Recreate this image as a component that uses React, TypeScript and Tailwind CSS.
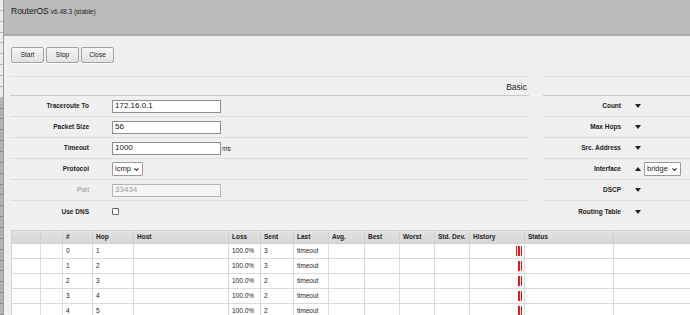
import { ChevronDown } from 'lucide-react'

// ── Data ───────────────────────────────────────────────────────────────────

const FORM_ROWS = [
  { label: 'Traceroute To', kind: 'input', value: '172.16.0.1' },
  { label: 'Packet Size', kind: 'input', value: '56' },
  { label: 'Timeout', kind: 'input', value: '1000', unit: 'ms' },
  { label: 'Protocol', kind: 'select', value: 'icmp' },
  { label: 'Port', kind: 'disabled', value: '33434' },
  { label: 'Use DNS', kind: 'check', value: '' },
]

const SIDE_ROWS = [
  { label: 'Count' },
  { label: 'Max Hops' },
  { label: 'Src. Address' },
  { label: 'Interface', open: true },
  { label: 'DSCP' },
  { label: 'Routing Table' },
]

const COLS = [
  { name: '', w: 29 },
  { name: '', w: 22 },
  { name: '#', w: 30 },
  { name: 'Hop', w: 41 },
  { name: 'Host', w: 95 },
  { name: 'Loss', w: 32 },
  { name: 'Sent', w: 33 },
  { name: 'Last', w: 35 },
  { name: 'Avg.', w: 36 },
  { name: 'Best', w: 35 },
  { name: 'Worst', w: 35 },
  { name: 'Std. Dev.', w: 35 },
  { name: 'History', w: 55 },
  { name: 'Status', w: 89 },
  { name: '', w: 77 },
]

const HOPS = [
  { n: 0, hop: 1, sent: 3, bars: 3 },
  { n: 1, hop: 2, sent: 3, bars: 2 },
  { n: 2, hop: 3, sent: 2, bars: 2 },
  { n: 3, hop: 4, sent: 2, bars: 2 },
  { n: 4, hop: 5, sent: 2, bars: 2 },
]

// ── Small pieces ───────────────────────────────────────────────────────────

function Btn({ children }: { children: React.ReactNode }) {
  return (
    <button className="h-[16px] px-[7px] min-w-[33px] rounded-[2px] border border-[#a3a3a3] bg-gradient-to-b from-[#f6f6f6] to-[#e1e1e1] text-[6.5px] text-[#222] shadow-[0_1px_0_#fff]">
      {children}
    </button>
  )
}

function Caret({ up }: { up?: boolean }) {
  return (
    <svg width="6" height="4" viewBox="0 0 6 4" className="block">
      {up ? <path d="M0 4 L3 0 L6 4 Z" fill="#222" /> : <path d="M0 0 L6 0 L3 4 Z" fill="#222" />}
    </svg>
  )
}

function Select({ value, w }: { value: string; w: string }) {
  return (
    <div className={`${w} h-[14px] flex items-center justify-between px-[2px] bg-white border border-[#9a9a9a] rounded-[1px] text-[7.5px] text-[#222]`}>
      <span>{value}</span>
      <ChevronDown size={7} strokeWidth={3.5} className="text-[#222]" />
    </div>
  )
}

// ── Component ──────────────────────────────────────────────────────────────

export default function App() {
  return (
    <div className="w-[690px] h-[315px] overflow-hidden flex bg-[#f0f0f0] font-['Liberation_Sans',Arial,sans-serif]">
      {/* Sidebar edge */}
      <div className="w-[4px] flex-shrink-0 flex flex-col border-r border-[#9a9a9a]">
        {Array.from({ length: 9 }).map((_, i) => (
          <div key={i} className="h-[11px] bg-[#ececec] border-b border-[#b8b8b8]" />
        ))}
        {Array.from({ length: 20 }).map((_, i) => (
          <div key={'g' + i} className="h-[11px] bg-[#b4b4b4] border-b border-[#8e8e8e]" />
        ))}
      </div>

      <div className="flex-1 flex flex-col min-w-0">
        {/* Title bar */}
        <div className="h-[36px] flex-shrink-0 bg-[#bbbbbb] border-b-2 border-[#a9a9a9] pl-[7px] pt-[5px] flex items-start">
          <span className="text-[8.5px] text-[#111] leading-[12px]">RouterOS</span>
          <span className="text-[6.5px] text-[#222] leading-[12px] ml-[2px] pt-[1px]">v6.48.3 (stable)</span>
        </div>

        {/* Buttons */}
        <div className="flex gap-[2px] pl-[7px] mt-[11px]">
          <Btn>Start</Btn>
          <Btn>Stop</Btn>
          <Btn>Close</Btn>
        </div>

        {/* Form */}
        <div className="flex mt-[13px] ml-[6px]">
          <div className="w-[519px]">
            <div className="h-[20px] border-t border-[#e0e0e0] border-b border-b-[#c9c9c9] flex items-end justify-end pr-[2px] pb-[4px]">
              <span className="text-[8.5px] text-[#222] leading-none">Basic</span>
            </div>
            {FORM_ROWS.map((r, i) => (
              <div key={r.label} className={`h-[21px] flex items-center ${i < FORM_ROWS.length - 1 ? 'border-b border-[#dedede]' : ''}`}>
                <div className={`w-[79px] text-right text-[6.5px] ${r.kind === 'disabled' ? 'text-[#888] font-normal' : 'text-[#222] font-bold'}`}>
                  {r.label}
                </div>
                <div className="ml-[23px] flex items-center">
                  {r.kind === 'input' && (
                    <div className="w-[109px] h-[13px] bg-white border border-[#8f8f8f] px-[2px] flex items-center text-[8px] text-[#111]">
                      {r.value}
                    </div>
                  )}
                  {r.kind === 'disabled' && (
                    <div className="w-[109px] h-[13px] bg-[#f6f6f6] border border-[#b5b5b5] px-[2px] flex items-center text-[8px] text-[#999]">
                      {r.value}
                    </div>
                  )}
                  {r.kind === 'select' && <Select value={r.value} w="w-[31px]" />}
                  {r.kind === 'check' && <div className="w-[7px] h-[7px] bg-white border border-[#666] rounded-[1px]" />}
                  {r.unit && <span className="ml-[1px] pt-[2px] text-[6.5px] text-[#222]">{r.unit}</span>}
                </div>
              </div>
            ))}
          </div>

          <div className="ml-[14px] flex-1">
            <div className="h-[20px] border-t border-[#e0e0e0] border-b border-b-[#c9c9c9]" />
            {SIDE_ROWS.map((r, i) => (
              <div key={r.label} className={`h-[21px] flex items-center ${i < SIDE_ROWS.length - 1 ? 'border-b border-[#dedede]' : ''}`}>
                <div className="w-[78px] text-right text-[6.5px] font-bold text-[#222]">{r.label}</div>
                <div className="ml-[14px]">
                  <Caret up={r.open} />
                </div>
                {r.open && (
                  <div className="ml-[3px]">
                    <Select value="bridge" w="w-[37px]" />
                  </div>
                )}
              </div>
            ))}
          </div>
        </div>

        {/* Hops table */}
        <div className="mt-[8px] ml-[7px]">
          <table className="table-fixed border-collapse text-[6.5px] text-[#222]" style={{ width: COLS.reduce((s, c) => s + c.w, 0) }}>
            <colgroup>
              {COLS.map((c, i) => (
                <col key={i} style={{ width: c.w }} />
              ))}
            </colgroup>
            <thead>
              <tr className="h-[13px] bg-gradient-to-b from-[#e2e2e2] to-[#d6d6d6]">
                {COLS.map((c, i) => (
                  <th key={i} className="border border-[#cfcfcf] text-left font-bold px-[3px] py-0 leading-none whitespace-nowrap overflow-hidden">
                    {c.name}
                  </th>
                ))}
              </tr>
            </thead>
            <tbody>
              {HOPS.map((h) => (
                <tr key={h.n} className="h-[15px] bg-white">
                  <td className="border border-[#dadada]" />
                  <td className="border border-[#dadada]" />
                  <td className="border border-[#dadada] px-[3px]">{h.n}</td>
                  <td className="border border-[#dadada] px-[3px]">{h.hop}</td>
                  <td className="border border-[#dadada]" />
                  <td className="border border-[#dadada] px-[3px]">100.0%</td>
                  <td className="border border-[#dadada] px-[3px]">{h.sent}</td>
                  <td className="border border-[#dadada] px-[3px]">timeout</td>
                  <td className="border border-[#dadada]" />
                  <td className="border border-[#dadada]" />
                  <td className="border border-[#dadada]" />
                  <td className="border border-[#dadada]" />
                  <td className="border border-[#dadada] pr-[2px]">
                    <div className="flex justify-end gap-[1px]">
                      {Array.from({ length: h.bars }).map((_, j) => (
                        <div key={j} className="w-[1.5px] h-[10px] bg-[#ff1010]" />
                      ))}
                    </div>
                  </td>
                  <td className="border border-[#dadada]" />
                  <td className="border border-[#dadada]" />
                </tr>
              ))}
            </tbody>
          </table>
        </div>
      </div>
    </div>
  )
}
